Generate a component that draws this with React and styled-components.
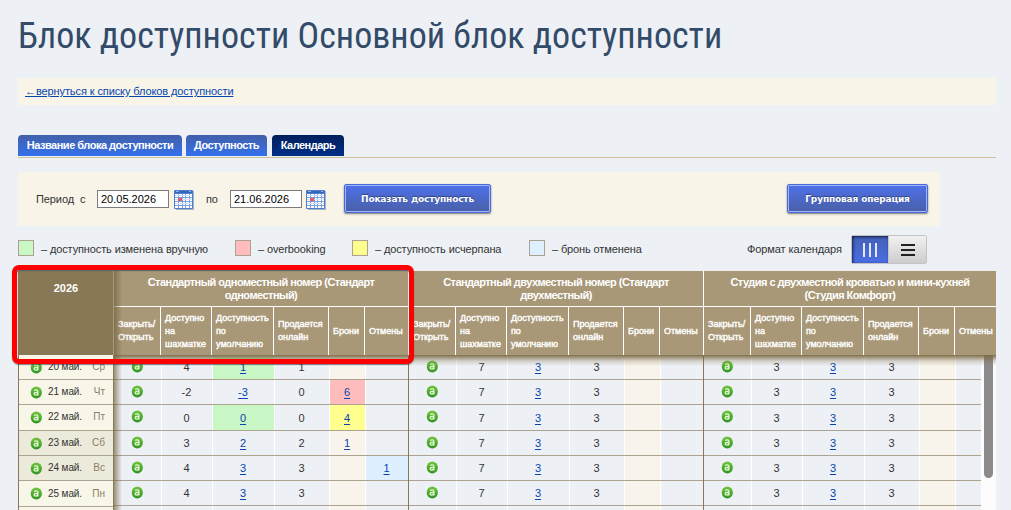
import React from 'react';
import styled, { createGlobalStyle, css } from 'styled-components';

const GlobalStyle = createGlobalStyle`
  * { box-sizing: border-box; }
  html, body { margin: 0; padding: 0; }
  body {
    height: 510px;
    overflow: hidden;
    background: #edf1f5;
    color: #333;
    font-family: "Liberation Sans", Arial, sans-serif;
    font-size: 11px;
  }
`;

const groups = [
  {
    name: ['Стандартный одноместный номер (Стандарт', 'одноместный)'],
    rows: [
      ['4', '1', '1', '', ''],
      ['-2', '-3', '0', '6', ''],
      ['0', '0', '0', '4', ''],
      ['3', '2', '2', '1', ''],
      ['4', '3', '3', '', '1'],
      ['4', '3', '3', '', ''],
    ],
    marks: { '0-1': 'changed', '1-3': 'over', '2-1': 'changed', '2-3': 'empty', '4-4': 'canceled' },
  },
  {
    name: ['Стандартный двухместный номер (Стандарт', 'двухместный)'],
    rows: Array(6).fill(['7', '3', '3', '', '']),
    marks: {},
  },
  {
    name: ['Студия с двухместной кроватью и мини-кухней', '(Студия Комфорт)'],
    rows: Array(6).fill(['3', '3', '3', '', '']),
    marks: {},
  },
];

const days = [
  ['20 май.', 'Ср'],
  ['21 май.', 'Чт'],
  ['22 май.', 'Пт'],
  ['23 май.', 'Сб', true],
  ['24 май.', 'Вс', true],
  ['25 май.', 'Пн'],
];

const colors = {
  changed: '#c9f7c6',
  over: '#ffbcbc',
  empty: '#ffff8f',
  canceled: '#deefff',
};

const legend = [
  ['changed', '– доступность изменена вручную', 217],
  ['over', '– overbooking', 117],
  ['empty', '– доступность исчерпана', 177],
  ['canceled', '– бронь отменена', 218],
];

const Page = styled.div`
  width: 978px;
  margin-left: 18px;
`;

const Title = styled.h1`
  margin: 0;
  height: 78px;
  padding-top: 15px;
  font: 400 36px/42px "Roboto Condensed", Roboto, sans-serif;
  color: #334b68;
  white-space: nowrap;
`;

const BackBar = styled.div`
  height: 27px;
  padding-left: 7px;
  background: #f8f5e8;
  line-height: 26px;
`;

const BackLink = styled.a`
  color: #0645ad;
  text-decoration: underline;
  letter-spacing: -0.1px;
`;

const Tabs = styled.div`
  display: flex;
  height: 53px;
  padding-top: 30px;
  border-bottom: 1px solid #cfc29b;
`;

const Tab = styled.div`
  width: ${p => p.$w}px;
  height: 21px;
  margin-right: ${p => p.$gap || 0}px;
  border-radius: 4px 4px 0 0;
  background: ${p => p.$active
    ? 'linear-gradient(#001f5c, #003087)'
    : 'linear-gradient(#415fa8, #3471ee)'};
  color: #fff;
  font-weight: bold;
  line-height: 20px;
  letter-spacing: -0.5px;
  text-align: center;
  white-space: nowrap;
`;

const Filter = styled.div`
  display: flex;
  align-items: flex-start;
  width: 922px;
  height: 54px;
  margin-top: 14px;
  padding: 12px 12px 0 18px;
  background: #f8f5e8;
`;

const Label = styled.span`
  width: ${p => p.$w}px;
  line-height: 30px;
  white-space: pre;
  letter-spacing: -0.1px;
`;

const DateInput = styled.input`
  width: 72px;
  height: 18px;
  margin: 6px ${p => p.$gap}px 0 0;
  padding: 0 3px;
  border: 1px solid #7b7b7b;
  border-radius: 0;
  background: #fff;
  color: #000;
  font: 11px "Liberation Sans", Arial, sans-serif;
  outline: none;
`;

const CalIcon = styled.svg`
  flex: none;
  width: 20px;
  height: 20px;
  margin: 6px ${p => p.$gap}px 0 0;
`;

const Button = styled.button`
  width: ${p => p.$w}px;
  height: 29px;
  margin-left: ${p => (p.$right ? 'auto' : 0)};
  padding: 1px 0 0;
  border: 1px solid #4668e0;
  border-radius: 2px;
  background: linear-gradient(#4d70e8, #4a60a8);
  box-shadow: inset 0 0 0 1px #a3b4f0, 0 1px 2px rgba(0, 0, 0, 0.5);
  color: #fff;
  font: bold 9px "DejaVu Sans", Verdana, sans-serif;
  letter-spacing: -0.15px;
  text-shadow: 0 -1px 1px rgba(0, 0, 0, 0.4);
  white-space: nowrap;
`;

const Legend = styled.div`
  display: flex;
  height: 45px;
  padding-top: 9px;
`;

const LegendItem = styled.div`
  display: flex;
  width: ${p => p.$w}px;
  padding-top: 5px;
  line-height: 18px;
  letter-spacing: -0.12px;
  white-space: nowrap;
`;

const Swatch = styled.i`
  width: 16px;
  height: 16px;
  margin-right: 7px;
  border: 1px solid #aaa391;
  background: ${p => colors[p.$kind]};
`;

const FormatLabel = styled.div`
  width: 104px;
  padding-top: 5px;
  line-height: 18px;
  letter-spacing: -0.1px;
`;

const Toggle = styled.div`
  display: flex;
  width: 76px;
  height: 29px;
  border: 1px solid #c3c3c3;
  border-radius: 2px;
`;

const ToggleButton = styled.div`
  display: flex;
  align-items: center;
  justify-content: center;
  flex: ${p => (p.$active ? '0 0 36px' : '1')};
  ${p => p.$active ? css`
    background: linear-gradient(#4560b4, #4a6fe6);
    box-shadow: inset 1px 1px 3px rgba(0, 0, 40, 0.75);
  ` : css`
    background: linear-gradient(#f1f1f1, #cdcdcd);
    border-left: 1px solid #c8c8c8;
  `}
`;

const Calendar = styled.div`
  position: relative;
  height: 239px;
`;

const Head = styled.div`
  display: flex;
  height: 84px;
  color: #fff;
`;

const Year = styled.div`
  width: 96px;
  padding: 10px 0 0 1px;
  background: #887856;
  border-right: 1px solid #a99a79;
  font-weight: bold;
  line-height: 14px;
  text-align: center;
`;

const HeadGroup = styled.div`
  width: ${p => (p.$last ? 292 : 295)}px;
  overflow: hidden;
  background: #a99877;
  ${p => !p.$last && 'border-right: 1px solid #fff;'}
`;

const GroupName = styled.div`
  height: 36px;
  padding-top: 5px;
  border-bottom: 1px solid #fff;
  font-weight: bold;
  line-height: 13px;
  letter-spacing: -0.53px;
  text-align: center;
  white-space: nowrap;
`;

const HeadCols = styled.div`
  display: grid;
  grid-template-columns: 47px 51px 62px 55px 36px 43px;
  height: 48px;
`;

const HeadCell = styled.div`
  display: flex;
  align-items: center;
  padding-left: 4px;
  border-right: 1px solid #fff;
  font-size: 9px;
  line-height: 13px;
  white-space: pre;
  -webkit-text-stroke: 0.4px #fff;
  &:last-child { border-right: 0; }
`;

const Body = styled.div`
  position: relative;
  display: flex;
  height: 155px;
  overflow: hidden;
`;

const Dates = styled.div`
  width: 96px;
  background: #f8f6e9;
  border-left: 1px solid #887856;
  border-right: 1px solid #887856;
`;

const rowHeights = [25, 25, 26, 25, 25, 26];

const DateRow = styled.div`
  display: flex;
  height: ${p => rowHeights[p.$i]}px;
  padding-left: 11px;
  border-bottom: 1px solid #aca390;
  background: ${p => (p.$weekend ? '#eceada' : '#f8f6e9')};
  font-size: 10px;
  line-height: ${p => (p.$i === 5 ? 25 : 23)}px;
`;

const DateText = styled.span`
  width: 38px;
  margin-left: 6px;
  letter-spacing: -0.1px;
  white-space: nowrap;
`;

const DayName = styled.span`
  width: 19px;
  text-align: right;
  color: #8b7d64;
`;

const BadgeIcon = styled.svg`
  display: block;
  flex: none;
  width: 12px;
  height: 13px;
  margin-top: ${p => p.$top || 0}px;
`;

const BodyGroup = styled.div`
  display: flex;
  flex-direction: column;
  width: ${p => (p.$last ? 277 : 295)}px;
  overflow: hidden;
  ${p => !p.$last && 'border-right: 1px solid #887856;'}
`;

const BodyRow = styled.div`
  display: grid;
  flex: none;
  grid-template-columns: 48px 51px 62px 55px 36px 42px;
  height: ${p => (p.$i === 5 ? 25 : rowHeights[p.$i] || 4)}px;
  border-bottom: ${p => (p.$i < 6 ? '1px solid #aca390' : '0')};
`;

const Cell = styled.div`
  display: flex;
  align-items: center;
  justify-content: center;
  padding-right: 1px;
  border-right: 1px solid #fff;
  background: ${p => colors[p.$kind] || (p.$cream ? '#f8f4ec' : '#edf1f5')};
  &:last-child { border-right: 0; }
`;

const CellLink = styled.a`
  color: #0645ad;
  text-decoration: underline;
  text-underline-offset: 2px;
`;

const HeadShadow = styled.div`
  position: absolute;
  left: 96px;
  right: 0;
  top: 0;
  height: 11px;
  background: linear-gradient(rgba(124, 105, 68, 0.95), rgba(124, 105, 68, 0.25) 55%, rgba(124, 105, 68, 0));
`;

const SideShadow = styled.div`
  position: absolute;
  left: 96px;
  top: 0;
  width: 8px;
  height: 239px;
  background: linear-gradient(90deg, rgba(110, 92, 56, 0.65), rgba(124, 105, 68, 0));
`;

const Scrollbar = styled.div`
  width: 15px;
  padding-left: 3px;
  background: #fcfcfc;
`;

const Thumb = styled.div`
  width: 9px;
  height: 123px;
  border-radius: 0 0 5px 5px;
  background: #8b8b8b;
`;

const Highlight = styled.div`
  position: absolute;
  left: -6px;
  top: -6px;
  width: 402px;
  height: 99px;
  border: 5px solid #fe0000;
  border-radius: 7px;
  box-shadow: 0 1px 1px rgba(40, 50, 60, 0.6), inset 0 1px 1px rgba(40, 50, 60, 0.8);
`;

function Badge({ top }) {
  return (
    <BadgeIcon viewBox="0 0 12 13" $top={top}>
      <defs>
        <linearGradient id="badge" x1="0" y1="0" x2="0" y2="1">
          <stop offset="0" stopColor="#72c53f" />
          <stop offset="1" stopColor="#2f9421" />
        </linearGradient>
      </defs>
      <ellipse cx="6.3" cy="6.5" rx="5.6" ry="6" fill="url(#badge)" />
      <path
        d="M4.1 4.6C5 3.7 7.9 3.5 7.9 5.3V9.5M7.9 6.5H5.6C3.7 6.5 3.7 9.1 5.4 9.1C6.6 9.1 7.9 8.5 7.9 7.3"
        fill="none"
        stroke="#e2f6d3"
        strokeWidth="1.3"
      />
    </BadgeIcon>
  );
}

function CalendarIcon({ gap }) {
  return (
    <CalIcon viewBox="0 0 20 20" $gap={gap}>
      <path d="M1 1H20V20H2V18H1Z" fill="#a9b2c0" />
      <rect x="0" y="0" width="19" height="19" rx="1" fill="#4d7fcf" />
      <rect x="1" y="4" width="17" height="14" fill="#fff" />
      <rect x="1" y="1" width="17" height="2" fill="#3466bb" />
      <path d="M2 1.5H5M15 1.5H17" stroke="#8db1e8" />
      <path d="M1 7.5H18M1 11.5H18M1 15.5H18M4.5 4V18M8.5 4V18M11.5 4V18M15.5 4V18" stroke="#7da2dd" />
      <path d="M1 5.5H18M1 9.5H18M1 13.5H18" stroke="#d3e0f5" />
      <rect x="4" y="8" width="4" height="3" fill="#e35b68" />
    </CalIcon>
  );
}

export default function App() {
  return (
    <>
      <GlobalStyle />
      <Page>
        <Title>Блок доступности Основной блок доступности</Title>
        <BackBar>
          <BackLink>←вернуться к списку блоков доступности</BackLink>
        </BackBar>
        <Tabs>
          <Tab $w={164} $gap={4}>Название блока доступности</Tab>
          <Tab $w={81} $gap={5}>Доступность</Tab>
          <Tab $w={72} $active>Календарь</Tab>
        </Tabs>
        <Filter>
          <Label $w={61}>{'Период  с'}</Label>
          <DateInput $gap={5} defaultValue="20.05.2026" />
          <CalendarIcon gap={12} />
          <Label $w={24}>по</Label>
          <DateInput $gap={4} defaultValue="21.06.2026" />
          <CalendarIcon gap={18} />
          <Button $w={147}>Показать доступность</Button>
          <Button $w={141} $right>Групповая операция</Button>
        </Filter>
        <Legend>
          {legend.map(([kind, text, w]) => (
            <LegendItem key={kind} $w={w}>
              <Swatch $kind={kind} />
              {text}
            </LegendItem>
          ))}
          <FormatLabel>Формат календаря</FormatLabel>
          <Toggle>
            <ToggleButton $active>
              <svg width="14" height="14" viewBox="0 0 14 14">
                <path d="M1 0V14M7 0V14M13 0V14" stroke="#fff" strokeWidth="1.7" />
              </svg>
            </ToggleButton>
            <ToggleButton>
              <svg width="14" height="14" viewBox="0 0 14 14">
                <path d="M0 2H14M0 7H14M0 12H14" stroke="#222" strokeWidth="2" />
              </svg>
            </ToggleButton>
          </Toggle>
        </Legend>
        <Calendar>
          <Head>
            <Year>2026</Year>
            {groups.map((g, i) => (
              <HeadGroup key={i} $last={i === 2}>
                <GroupName>{g.name[0]}<br />{g.name[1]}</GroupName>
                <HeadCols>
                  <HeadCell>{'Закрыть/\nОткрыть'}</HeadCell>
                  <HeadCell>{'Доступно\nна\nшахматке'}</HeadCell>
                  <HeadCell>{'Доступность\nпо\nумолчанию'}</HeadCell>
                  <HeadCell>{'Продается\nонлайн'}</HeadCell>
                  <HeadCell>Брони</HeadCell>
                  <HeadCell>Отмены</HeadCell>
                </HeadCols>
              </HeadGroup>
            ))}
          </Head>
          <Body>
            <Dates>
              {days.map(([date, day, weekend], i) => (
                <DateRow key={date} $i={i} $weekend={weekend}>
                  <Badge top={6} />
                  <DateText>{date}</DateText>
                  <DayName>{day}</DayName>
                </DateRow>
              ))}
            </Dates>
            {groups.map((g, gi) => (
              <BodyGroup key={gi} $last={gi === 2}>
                {g.rows.map((row, i) => (
                  <BodyRow key={i} $i={i}>
                    <Cell><Badge top={-2} /></Cell>
                    {row.map((v, c) => (
                      <Cell key={c} $kind={g.marks[i + '-' + c]} $cream={c === 3}>
                        {c === 0 || c === 2 ? v : v && <CellLink>{v}</CellLink>}
                      </Cell>
                    ))}
                  </BodyRow>
                ))}
                <BodyRow $i={6}>
                  <Cell /><Cell /><Cell /><Cell /><Cell $cream /><Cell />
                </BodyRow>
              </BodyGroup>
            ))}
            <Scrollbar><Thumb /></Scrollbar>
            <HeadShadow />
          </Body>
          <SideShadow />
          <Highlight />
        </Calendar>
      </Page>
    </>
  );
}
